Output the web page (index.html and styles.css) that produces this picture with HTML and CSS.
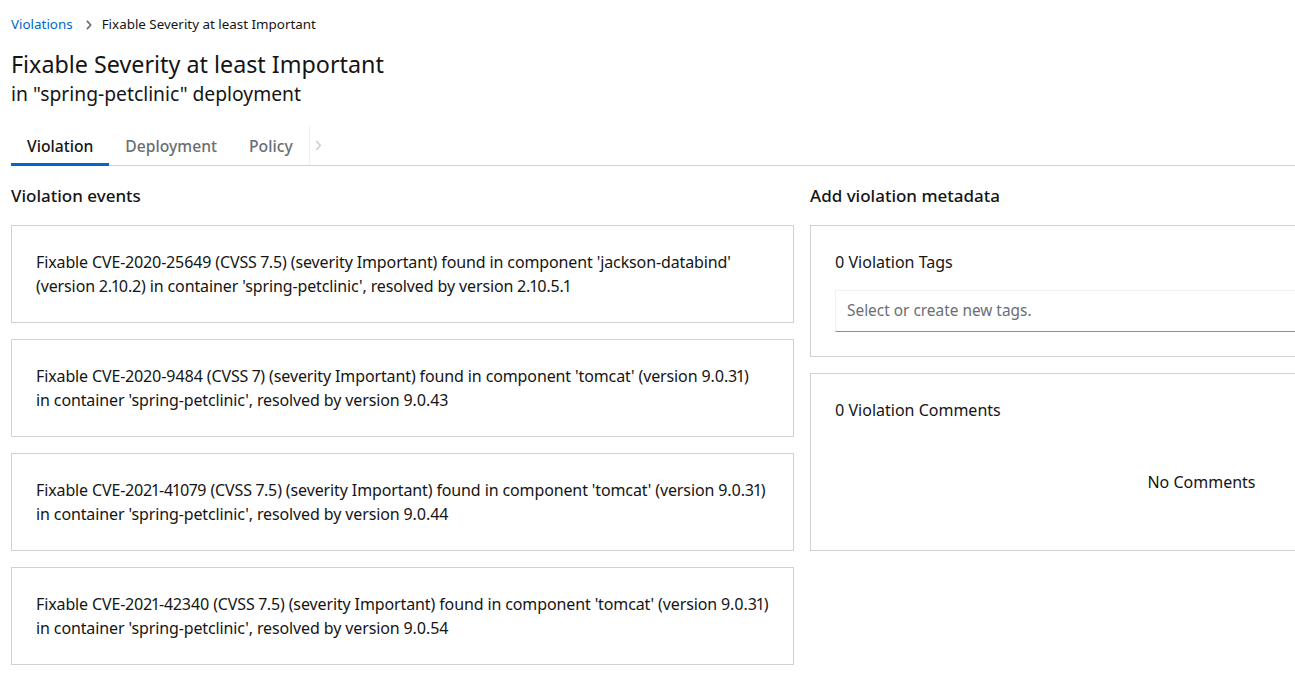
FILE: index.html
```html
<!DOCTYPE html>
<html>
<head>
<meta charset="utf-8">
<link rel="stylesheet" href="styles.css">
</head>
<body>
<div class="page">
  <nav class="breadcrumb">
    <a class="crumb-link" href="#">Violations</a>
    <svg class="crumb-sep" width="8" height="10" viewBox="0 0 8 12"><path d="M1.5 1 L6 6 L1.5 11" fill="none" stroke="#6a6e73" stroke-width="2"/></svg>
    <span class="crumb-current">Fixable Severity at least Important</span>
  </nav>
  <header class="header">
    <h1 class="title">Fixable Severity at least Important</h1>
    <div class="subtitle">in "spring-petclinic" deployment</div>
  </header>
  <div class="tabs">
    <div class="tab active">Violation</div>
    <div class="tab">Deployment</div>
    <div class="tab">Policy</div>
    <div class="tab-scroll">
      <svg width="7" height="11" viewBox="0 0 8 12"><path d="M1.5 1 L6 6 L1.5 11" fill="none" stroke="#d2d2d2" stroke-width="2"/></svg>
    </div>
  </div>
  <div class="columns">
    <section class="col">
      <h2 class="section-title">Violation events</h2>
      <div class="card-list">
        <div class="card event">Fixable CVE-2020-25649 (CVSS 7.5) (severity Important) found in component 'jackson-databind' (version 2.10.2) in&nbsp;container 'spring-petclinic', resolved by version 2.10.5.1</div>
        <div class="card event">Fixable CVE-2020-9484 (CVSS 7) (severity Important) found in component 'tomcat' (version 9.0.31) in&nbsp;container 'spring-petclinic', resolved by version 9.0.43</div>
        <div class="card event">Fixable CVE-2021-41079 (CVSS 7.5) (severity Important) found in component 'tomcat' (version 9.0.31) in&nbsp;container 'spring-petclinic', resolved by version 9.0.44</div>
        <div class="card event">Fixable CVE-2021-42340 (CVSS 7.5) (severity Important) found in component 'tomcat' (version 9.0.31) in&nbsp;container 'spring-petclinic', resolved by version 9.0.54</div>
      </div>
    </section>
    <section class="col">
      <h2 class="section-title">Add violation metadata</h2>
      <div class="card-list">
        <div class="card meta">
          <div class="meta-title">0 Violation Tags</div>
          <div class="tag-input">Select or create new tags.</div>
        </div>
        <div class="card meta comments">
          <div class="meta-title">0 Violation Comments</div>
          <div class="no-comments">No Comments</div>
        </div>
      </div>
    </section>
  </div>
</div>
</body>
</html>
```
FILE: styles.css
```css
* { box-sizing: border-box; }
html, body { margin: 0; padding: 0; }
body {
  font-family: "Noto Sans", "Liberation Sans", sans-serif;
  font-variant-numeric: proportional-nums;
  color: #151515;
  background: #fff;
  overflow: hidden;
  width: 1295px;
}
.page {
  padding: 13px 0 0 11px;
}
.breadcrumb {
  display: flex;
  align-items: center;
  font-size: 13.4px;
  line-height: 21px;
  height: 21px;
  margin-top: 1px;
}
.crumb-link { color: #0066cc; text-decoration: none; }
.crumb-sep { margin: 0 9px 0 12px; }
.crumb-current { color: #151515; }
.header { margin-top: 14px; }
.title {
  margin: 0;
  font-size: 23.3px;
  font-weight: 400;
  line-height: 30px;
}
.subtitle {
  font-size: 19.3px;
  line-height: 30px;
  margin-top: 0;
}
.tabs {
  margin-top: 17px;
  display: flex;
  align-items: stretch;
  border-bottom: 1px solid #d2d2d2;
  height: 40px;
}
.tab {
  padding: 0 16px;
  font-size: 15.7px;
  font-weight: 500;
  color: #6a6e73;
  display: flex;
  align-items: center;
  position: relative;
}
.tab.active { color: #151515; }
.tab.active::after {
  content: "";
  position: absolute;
  left: 0; right: 0; bottom: -1px;
  height: 3px;
  background: #0066cc;
}
.tab-scroll {
  border-left: 1px solid #f0f0f0;
  width: 18px;
  display: flex;
  align-items: center;
  justify-content: center;
}
.columns {
  display: grid;
  grid-template-columns: 783px 783px;
  column-gap: 16px;
  margin-top: 18px;
}
.section-title {
  margin: 0;
  font-size: 17px;
  font-weight: 500;
  line-height: 24px;
}
.card-list {
  margin-top: 17px;
  display: flex;
  flex-direction: column;
  gap: 16px;
}
.card {
  border: 1px solid #d2d2d2;
  padding: 24px;
  font-size: 16px;
  line-height: 24px;
}
.card.event {
  letter-spacing: -0.12px;
  padding-right: 20px;
}
.meta-title { line-height: 24px; }
.tag-input {
  margin-top: 16px;
  height: 42px;
  border: 1px solid #f0f0f0;
  border-bottom: 1px solid #8a8d90;
  padding: 0 11px;
  display: flex;
  align-items: center;
  color: #6a6e73;
  font-size: 15.4px;
}
.card.comments { padding-bottom: 36px; }
.no-comments {
  text-align: center;
  margin-top: 48px;
  padding-bottom: 20px;
}
```
